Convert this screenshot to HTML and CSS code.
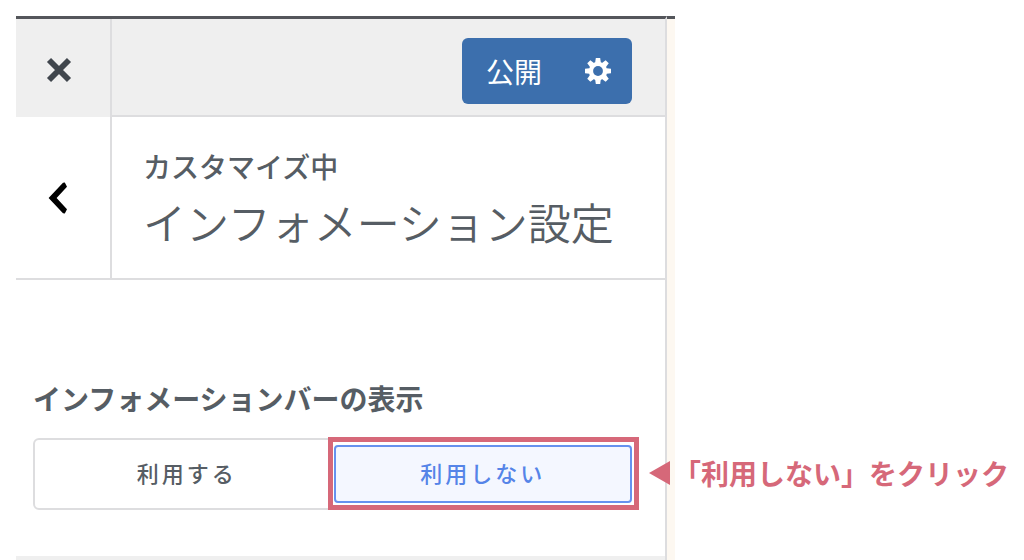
FILE: index.html
```html
<!DOCTYPE html>
<html lang="ja">
<head>
<meta charset="utf-8">
<title>インフォメーション設定</title>
<link rel="stylesheet" href="styles.css">
</head>
<body>
<div class="page">
  <main class="panel">
    <header class="toolbar">
      <button class="close" type="button" aria-label="閉じる">
        <svg width="26" height="26" viewBox="0 0 26 26"><path d="M3 3 23 23M23 3 3 23" fill="none" stroke="currentColor" stroke-width="5.8"/></svg>
      </button>
      <div class="actions">
        <button class="publish" type="button">
          <span>公開</span>
          <svg width="26" height="26" viewBox="-13 -13 26 26">
            <g fill="currentColor">
              <circle r="9.2"/>
              <path id="teeth" d="M-2.8-8.5-2.2-13H2.2L2.8-8.5V8.5L2.2 13H-2.2L-2.8 8.5Z"/>
              <use href="#teeth" transform="rotate(45)"/>
              <use href="#teeth" transform="rotate(90)"/>
              <use href="#teeth" transform="rotate(135)"/>
            </g>
            <circle class="gear-hole" r="4.9"/>
          </svg>
        </button>
      </div>
    </header>
    <div class="section-head">
      <button class="back" type="button" aria-label="戻る">
        <svg width="20" height="32" viewBox="0 0 20 32"><path d="M16.8 0.6 19 4.8 8.6 16 19 27.2 16.8 31.4 15 31.2 0.6 16 15 0.8Z" fill="currentColor"/></svg>
      </button>
      <h1 class="titles">
        <span class="kicker">カスタマイズ中</span>
        <span class="title">インフォメーション設定</span>
      </h1>
    </div>
    <fieldset class="setting">
      <legend class="setting-name">インフォメーションバーの表示</legend>
      <div class="choices">
        <label class="choice"><input type="radio" name="bar" value="on">利用する</label>
        <label class="choice"><input type="radio" name="bar" value="off" checked>利用しない</label>
        <div class="frame"></div>
        <p class="callout">
          <svg width="21" height="24" viewBox="0 0 21 24"><path d="M0 12 21 0V24Z" fill="currentColor"/></svg>
          <span>「利用しない」をクリック</span>
        </p>
      </div>
    </fieldset>
    <div class="rest"></div>
  </main>
  <div class="preview"></div>
</div>
</body>
</html>
```
FILE: styles.css
```css
* { box-sizing: border-box; }
body {
  margin: 0;
  background: #fff;
  color: #565d64;
  font-family: "Noto Sans CJK JP", sans-serif;
}
button {
  margin: 0;
  padding: 0;
  border: 0;
  background: none;
  font: inherit;
  cursor: pointer;
}
svg { display: block; flex: none; }
.page {
  display: grid;
  grid-template-columns: 651fr 8px 349fr;
  min-height: 100vh;
  padding: 16px 0 0 16px;
}
.panel {
  display: flex;
  flex-direction: column;
  border-top: 3px solid #54565b;
  border-right: 2px solid #dddddf;
}
.preview {
  border-top: 3px solid #54565b;
  background: #fdf8f1;
}
.toolbar, .section-head {
  display: grid;
  grid-template-columns: 94px 1fr;
}
.toolbar { background: #efefef; }
.close {
  display: grid;
  place-items: center;
  padding: 4px 8px 0 0;
  color: #40464d;
}
.actions {
  display: flex;
  justify-content: flex-end;
  padding: 19px 33px 11px;
  border-left: 2px solid #dddddf;
  border-bottom: 2px solid #dddddf;
}
.publish {
  display: flex;
  align-items: center;
  gap: 43px;
  height: 66px;
  padding: 0 21px 0 24px;
  border-radius: 6px;
  background: #3c6fad;
  color: #fff;
  font-size: 28px;
}
.gear-hole { fill: #3c6fad; }
.section-head { border-bottom: 2px solid #dddddf; }
.back {
  display: grid;
  place-items: center;
  padding-right: 10px;
  color: #000;
}
.titles {
  display: flex;
  flex-direction: column;
  margin: 0;
  padding: 29px 0 21px 31px;
  border-left: 2px solid #dddddf;
}
.kicker {
  font-size: 28px;
  font-weight: 500;
  line-height: 40px;
}
.title {
  font-size: 43px;
  font-weight: 350;
  line-height: 71px;
  white-space: nowrap;
}
.setting {
  min-width: 0;
  margin: 0;
  padding: 98px 28px 46px 17px;
  border: 0;
}
.setting-name {
  float: left;
  width: 100%;
  padding: 0 0 20px;
  font-size: 28px;
  font-weight: 700;
  line-height: 40px;
}
.choices {
  clear: both;
  position: relative;
  display: grid;
  grid-template-columns: 1fr 1fr;
  height: 72px;
  padding: 5px 3px 5px 0;
  border: 2px solid #dddddf;
  border-radius: 6px;
}
.choice {
  display: grid;
  place-items: center;
  padding-bottom: 4px;
  border-radius: 4px;
  font-size: 22px;
  font-weight: 500;
  letter-spacing: 3px;
  cursor: pointer;
}
.choice:first-child { padding-left: 5px; }
.choice input {
  position: absolute;
  opacity: 0;
  pointer-events: none;
}
.choice:has(:checked) {
  border: 2px solid #6691ee;
  background: #f4f7ff;
  color: #5584e8;
}
.frame {
  position: absolute;
  inset: -3px -4px -2px calc(50% - 7px);
  border: 5px solid #d66879;
  pointer-events: none;
}
.callout {
  position: absolute;
  top: 13px;
  left: calc(100% + 14px);
  display: flex;
  align-items: center;
  gap: 3px;
  margin: 0;
  color: #d66879;
  font-size: 28px;
  font-weight: 700;
  line-height: 40px;
  white-space: nowrap;
}
.rest { flex: 1; background: #efefef; }
```
